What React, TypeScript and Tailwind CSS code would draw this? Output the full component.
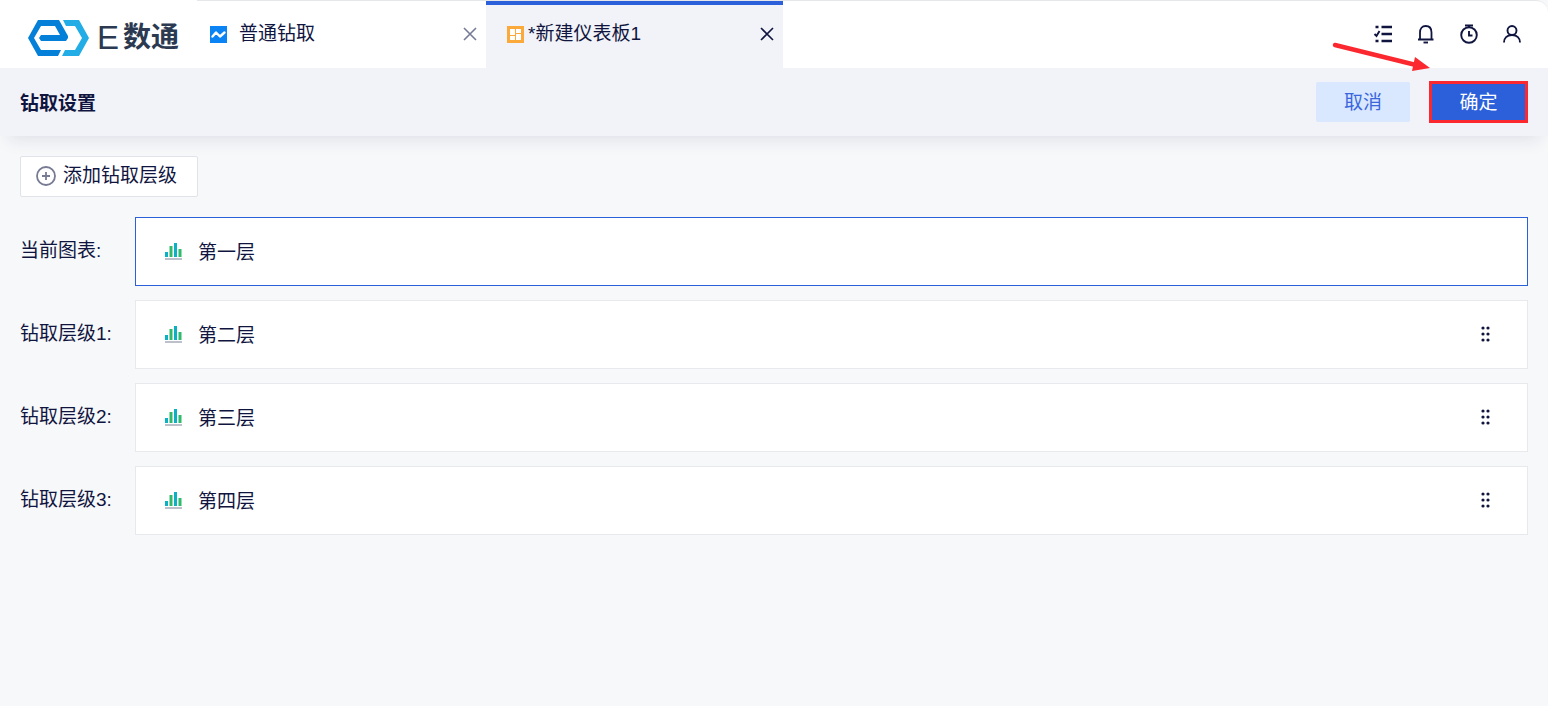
import type { ReactNode } from 'react'

const levels = [
  { label: '当前图表:', name: '第一层', current: true },
  { label: '钻取层级1:', name: '第二层', current: false },
  { label: '钻取层级2:', name: '第三层', current: false },
  { label: '钻取层级3:', name: '第四层', current: false },
]

function Logo() {
  return (
    <a href="#" className="flex w-[197px] shrink-0 items-center gap-2 pt-2 pl-7 text-[#2b3a50]">
      <svg width="61" height="36" viewBox="0 0 61 36" className="shrink-0" aria-hidden="true">
        <path
          d="M10 0H31L40 16V18L38 21H13L11 18L13 15H32L27 6H13L6 18L13 30H33L30 36H10L0 18Z"
          fill="#0480d9"
        />
        <path d="M35 0H51L61 18L51 36H34L37 30H47L54 18L47 6H38Z" fill="#22ade6" />
      </svg>
      <span className="flex items-center gap-1 text-[28px] leading-9 font-bold whitespace-nowrap">
        <span className="text-[33px] font-normal">E</span>
        <span>数通</span>
      </span>
    </a>
  )
}

function ChartTabIcon() {
  return (
    <svg width="17" height="17" viewBox="0 0 17 17" className="shrink-0" aria-hidden="true">
      <path d="M0 0H17V17H0Z" fill="#0a84f5" />
      <path
        d="M2.5 10.5L6 6.5L10 10.5L14.5 6.5"
        fill="none"
        stroke="#fff"
        strokeWidth="2.4"
        strokeLinecap="round"
        strokeLinejoin="round"
      />
    </svg>
  )
}

function DashboardTabIcon() {
  return (
    <svg width="17" height="17" viewBox="0 0 17 17" className="shrink-0" aria-hidden="true">
      <path d="M0 0H17V17H0Z" fill="#fba93b" />
      <path d="M3 3H8V9H3ZM9 3H14V7H9ZM3 10H8V14H3ZM9 8H14V14H9Z" fill="#fff" />
    </svg>
  )
}

function CloseIcon() {
  return (
    <svg width="14" height="14" viewBox="0 0 14 14" aria-hidden="true">
      <path d="M1 1L13 13M13 1L1 13" stroke="currentColor" strokeWidth="1.6" />
    </svg>
  )
}

function BarIcon() {
  return (
    <svg width="17" height="17" viewBox="0 0 17 17" className="shrink-0" aria-hidden="true">
      <path d="M0 9H3V14H0ZM9 0H12V14H9Z" fill="#0bb0c4" />
      <path d="M4.5 3H7.5V14H4.5ZM13.5 6H16.5V14H13.5Z" fill="#2fba6c" />
      <path d="M0 15H17V17H0Z" fill="#bcc0ca" />
    </svg>
  )
}

function DragIcon() {
  return (
    <svg width="9" height="17" viewBox="0 0 9 17" fill="#10153f" aria-hidden="true">
      {[2, 8, 14].map((y) => (
        <g key={y}>
          <circle cx="2" cy={y} r="1.6" />
          <circle cx="7" cy={y} r="1.6" />
        </g>
      ))}
    </svg>
  )
}

function Tab({ icon, title, active = false }: { icon: ReactNode; title: string; active?: boolean }) {
  return (
    <div
      className={
        active
          ? 'flex w-[297px] items-center border-t-4 border-[#2c60db] bg-[#f2f3f8] pr-[9px] pb-[5px] pl-[21px]'
          : 'flex w-[289px] items-center pr-[9px] pb-px pl-[13px]'
      }
    >
      {icon}
      <button type="button" className={active ? 'flex-1 pl-1 text-left' : 'flex-1 pl-3 text-left'}>
        {title}
      </button>
      <button
        type="button"
        aria-label={`关闭 ${title}`}
        className={active ? 'text-[#10153f]' : 'text-[#757b96]'}
      >
        <CloseIcon />
      </button>
    </div>
  )
}

function IconButton({ label, children }: { label: string; children: ReactNode }) {
  return (
    <button type="button" aria-label={label}>
      <svg
        width="20"
        height="20"
        viewBox="0 0 20 20"
        fill="none"
        stroke="currentColor"
        strokeWidth="1.9"
        aria-hidden="true"
      >
        {children}
      </svg>
    </button>
  )
}

export default function App() {
  return (
    <div className="min-h-screen bg-[#f7f8fa] font-['Liberation_Sans','Noto_Sans_CJK_SC',sans-serif] text-[19px] leading-7 text-[#10153f]">
      <header className="relative flex h-[68px] rounded-tr-xl bg-white">
        <Logo />
        <div className="flex flex-1 rounded-tr-xl border-t border-[#e6e7ea]">
          <Tab icon={<ChartTabIcon />} title="普通钻取" />
          <Tab icon={<DashboardTabIcon />} title="*新建仪表板1" active />
          <div className="ml-auto flex items-center gap-[23px] pr-[26px] pb-[2px]">
            <IconButton label="任务">
              <path d="M8.5 3H19M8.5 10H19M8.5 17H19" strokeWidth="2.4" />
              <path d="M2.5 3H5.5M2.5 17H5.5" strokeWidth="2.4" />
              <path d="M1.5 10L3.5 12L6.5 7" />
            </IconButton>
            <IconButton label="消息">
              <path d="M2 15.5H17.5M4 15.5V8.5C4 4.5 6 2 9.75 2S15.5 4.5 15.5 8.5V15.5" strokeWidth="1.8" />
              <path d="M7.5 18.5H12" />
            </IconButton>
            <IconButton label="定时">
              <circle cx="10" cy="11" r="7.8" />
              <path d="M6 1.5H14M10 1.5V4M10 7V11.5H13.5" />
            </IconButton>
            <IconButton label="用户">
              <circle cx="10" cy="6.5" r="4.5" />
              <path d="M2 18.5C2 14 5 11 10 11S18 14 18 18.5" />
            </IconButton>
          </div>
        </div>
        <svg
          width="98"
          height="32"
          viewBox="0 0 98 32"
          className="absolute top-[41px] right-[118px] z-10"
          aria-hidden="true"
        >
          <path d="M3 4L84 24" stroke="#fb292f" strokeWidth="4.5" strokeLinecap="round" />
          <path d="M83 16L98 27L80 30Z" fill="#fb292f" />
        </svg>
      </header>

      <div className="flex h-[68px] items-center bg-[#f2f3f8] px-5 shadow-[0_12px_16px_-8px_#1a22441a]">
        <h1 className="pt-1 font-bold">钻取设置</h1>
        <div className="ml-auto flex items-center gap-[19px]">
          <button type="button" className="h-10 w-[94px] rounded-xs bg-[#d9e7ff] pt-[2px] text-[#3a67dc]">
            取消
          </button>
          <button
            type="button"
            className="h-[42px] w-[99px] border-3 border-[#fb292f] bg-[#2c60db] pt-[2px] text-white"
          >
            确定
          </button>
        </div>
      </div>

      <main className="p-5">
        <button
          type="button"
          className="flex h-[41px] items-center gap-[7px] rounded-xs border border-[#e1e3ea] bg-white pr-5 pb-[2px] pl-[15px]"
        >
          <svg width="20" height="20" viewBox="0 0 20 20" fill="none" stroke="#777b93" aria-hidden="true">
            <circle cx="10" cy="10" r="9" strokeWidth="1.8" />
            <path d="M10 6V14M6 10H14" strokeWidth="1.8" />
          </svg>
          添加钻取层级
        </button>

        <ul className="mt-5 flex flex-col gap-[14px]">
          {levels.map((level) => (
            <li key={level.label} className="flex items-center">
              <span className="w-[115px] shrink-0 pb-[2px]">{level.label}</span>
              <div
                className={
                  level.current
                    ? 'flex h-[69px] flex-1 items-center border border-[#2c60db] bg-white pr-[37px] pl-[29px]'
                    : 'flex h-[69px] flex-1 items-center border border-[#e8e9ed] bg-white pr-[37px] pl-[29px]'
                }
              >
                <BarIcon />
                <span className="pt-[2px] pl-4">{level.name}</span>
                {!level.current && (
                  <button type="button" aria-label={`拖动 ${level.name}`} className="ml-auto cursor-move">
                    <DragIcon />
                  </button>
                )}
              </div>
            </li>
          ))}
        </ul>
      </main>
    </div>
  )
}
